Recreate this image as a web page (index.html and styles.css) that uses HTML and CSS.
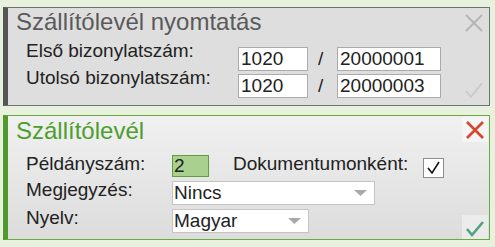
FILE: index.html
```html
<!DOCTYPE html>
<html>
<head>
    <meta charset="utf-8">
    <title>Szállítólevél nyomtatás</title>
    <link rel="stylesheet" href="styles.css">
</head>
<body>

<div class="panel panel-print">
    <div class="panel-main">
        <div class="panel-title">Szállítólevél nyomtatás</div>
        <div class="range-form">
            <div class="range-label">Első bizonylatszám:</div>
            <input class="field field-prefix" type="text" value="1020">
            <div class="range-slash">/</div>
            <input class="field field-number" type="text" value="20000001">

            <div class="range-label">Utolsó bizonylatszám:</div>
            <input class="field field-prefix" type="text" value="1020">
            <div class="range-slash">/</div>
            <input class="field field-number" type="text" value="20000003">
        </div>
    </div>
    <div class="panel-side">
        <span class="icon-btn icon-close">
            <svg width="26" height="24" viewBox="0 0 26 24"><path d="M5 4 L21 20 M21 4 L5 20"/></svg>
        </span>
        <span class="icon-btn icon-ok">
            <svg width="26" height="24" viewBox="0 0 26 24"><path d="M5 13 L10 19 L21 5"/></svg>
        </span>
    </div>
</div>

<div class="panel panel-note">
    <div class="panel-main">
        <div class="panel-title">Szállítólevél</div>
        <div class="note-form">
            <div class="note-label">Példányszám:</div>
            <div class="note-row">
                <input class="field field-copies" type="text" value="2">
                <div class="note-label doc-label">Dokumentumonként:</div>
                <span class="checkbox">
                    <svg width="21" height="20" viewBox="0 0 21 20"><path d="M5 10 L9 15 L16 4"/></svg>
                </span>
            </div>

            <div class="note-label">Megjegyzés:</div>
            <div class="select select-remark">
                <span>Nincs</span>
                <svg width="13" height="6" viewBox="0 0 13 6"><path d="M0 0 H13 L6.5 6 Z"/></svg>
            </div>

            <div class="note-label">Nyelv:</div>
            <div class="select select-lang">
                <span>Magyar</span>
                <svg width="13" height="6" viewBox="0 0 13 6"><path d="M0 0 H13 L6.5 6 Z"/></svg>
            </div>
        </div>
    </div>
    <div class="panel-side">
        <span class="icon-btn icon-close">
            <svg width="26" height="24" viewBox="0 0 26 24"><path d="M5 4 L21 20 M21 4 L5 20"/></svg>
        </span>
        <span class="icon-btn icon-ok">
            <svg width="26" height="24" viewBox="0 0 26 24"><path d="M5 14 L10 20 L21 7"/></svg>
        </span>
    </div>
</div>

</body>
</html>
```

FILE: styles.css
```css
body {
    margin: 0;
    padding: 7px 5px 0 3px;
    background: #e7f1de;
    font-family: "Liberation Sans", Arial, sans-serif;
    font-size: 19px;
    color: #222;
}

.panel {
    display: flex;
    width: 487px;
    box-sizing: border-box;
    border: 1px solid;
    border-left-width: 5px;
}

.panel-print {
    height: 99px;
    border-color: #707070;
    border-left-color: #555;
    background: #dedede;
}

.panel-note {
    height: 125px;
    margin-top: 9px;
    border-color: #6aab40;
    border-left-color: #4f9a2a;
    background: linear-gradient(#f1f1f1, #dcdcdc);
}

.panel-main {
    flex: 1;
}

.panel-title {
    font-size: 24px;
    line-height: 28px;
    padding-left: 8px;
}
.panel-print .panel-title {
    color: #5a5a5a;
}
.panel-note .panel-title {
    color: #4d9e2c;
    margin-top: 1px;
}

/* nyomtatás */
.range-form {
    display: grid;
    grid-template-columns: 212px 70px 29px 104px;
    grid-auto-rows: 24px;
    row-gap: 3px;
    margin: 11px 0 0 18px;
}
.range-label {
    line-height: 24px;
    margin-top: -8px;
}
.range-slash {
    line-height: 24px;
    padding-left: 10px;
}

.field {
    box-sizing: border-box;
    height: 24px;
    margin: 0;
    padding: 0 2px;
    border: 1px solid #ababab;
    background: #fff;
    font: inherit;
    color: #222;
    outline: none;
}
.field-prefix { width: 70px; }
.field-number { width: 104px; }

/* szállítólevél */
.note-form {
    display: grid;
    grid-template-columns: 146px auto;
    grid-template-rows: 22px 24px 24px;
    row-gap: 4px;
    margin: 10px 0 0 18px;
}
.note-label {
    line-height: 24px;
    margin-top: -3px;
}
.note-row {
    display: flex;
    align-items: flex-start;
}
.doc-label {
    margin-left: 24px;
}

.field-copies {
    width: 37px;
    height: 22px;
    padding: 0 1px;
    background: #a9d08e;
    border-color: #5f9f3e;
}

.checkbox {
    box-sizing: border-box;
    width: 21px;
    height: 20px;
    margin: 3px 0 0 15px;
    border: 1px solid #8c8c8c;
    background: #fff;
}
.checkbox svg {
    display: block;
    margin: -1px;
    fill: none;
    stroke: #111;
    stroke-width: 1.6;
}

.select {
    box-sizing: border-box;
    height: 24px;
    display: flex;
    align-items: center;
    justify-content: space-between;
    padding: 0 7px 0 1px;
    border: 1px solid #c4c4c4;
    background: #fff;
    line-height: 22px;
}
.select svg {
    fill: #a9a9a9;
}
.select-remark { width: 203px; }
.select-lang { width: 137px; }

/* jobb oldali gombok */
.panel-side {
    display: flex;
    flex-direction: column;
    justify-content: space-between;
    width: 26px;
    margin-right: 2px;
}
.panel-print .panel-side {
    padding: 3px 0;
}
.panel-note .panel-side {
    padding: 2px 0 0;
    margin-right: 1px;
}

.icon-btn {
    display: block;
    width: 26px;
    height: 24px;
}
.icon-btn svg {
    display: block;
    fill: none;
    stroke-width: 2;
}
.panel-print .icon-close svg { stroke: #b5b5b5; }
.panel-print .icon-ok svg { stroke: #c8c8c8; stroke-width: 1.6; }

.panel-note .icon-btn {
    background: rgba(255, 255, 255, 0.4);
}
.panel-note .icon-close svg { stroke: #d4472d; stroke-width: 2.6; }
.panel-note .icon-ok svg { stroke: #4fa27c; stroke-width: 2.6; }
```
